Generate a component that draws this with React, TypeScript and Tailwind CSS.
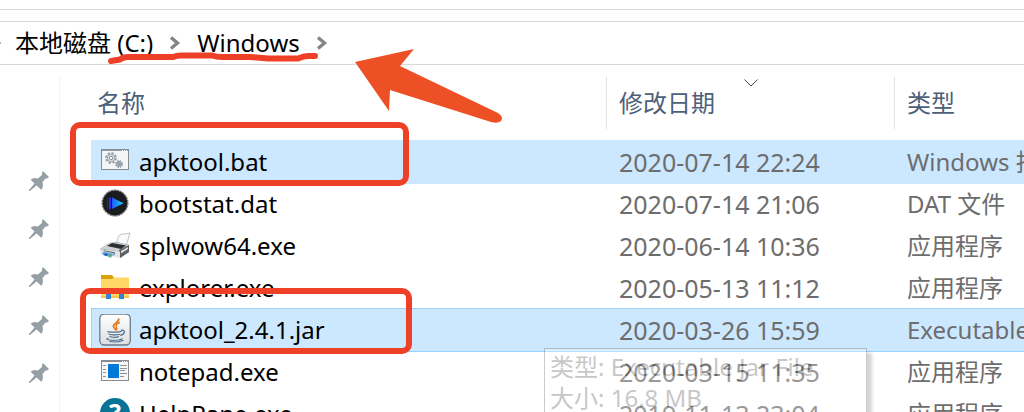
import React, { useState } from 'react';

type IconKind = 'batch' | 'media' | 'printer' | 'folder' | 'java' | 'app' | 'help';

interface FileEntry {
  name: string;
  modified: string;
  type: string;
  icon: IconKind;
}

const FILES: FileEntry[] = [
  { name: 'apktool.bat', modified: '2020-07-14 22:24', type: 'Windows 批处理文件', icon: 'batch' },
  { name: 'bootstat.dat', modified: '2020-07-14 21:06', type: 'DAT 文件', icon: 'media' },
  { name: 'splwow64.exe', modified: '2020-06-14 10:36', type: '应用程序', icon: 'printer' },
  { name: 'explorer.exe', modified: '2020-05-13 11:12', type: '应用程序', icon: 'folder' },
  { name: 'apktool_2.4.1.jar', modified: '2020-03-26 15:59', type: 'Executable Jar File', icon: 'java' },
  { name: 'notepad.exe', modified: '2020-03-15 11:35', type: '应用程序', icon: 'app' },
  { name: 'HelpPane.exe', modified: '2019-11-13 23:04', type: '应用程序', icon: 'help' },
];

const PINNED = ['桌面', '下载', '文档', '图片', '音乐'];

const FileIcon: React.FC<{ kind: IconKind }> = ({ kind }) => (
  <svg viewBox="0 0 32 32" className="size-8 shrink-0" aria-hidden="true">
    {kind === 'batch' && (
      <g>
        <rect x="2.5" y="3.5" width="27" height="20" fill="#f4f5f6" stroke="#868b90" />
        <path d="M3 4.5h26" stroke="#9a9fa4" />
        <path d="M23 4.5h1M25 4.5h1M27 4.5h1" stroke="#fff" />
        <circle cx="12" cy="12" r="4.6" fill="#d5dde3" stroke="#8d9aa5" strokeWidth="2.4" strokeDasharray="2 1.6" />
        <circle cx="12" cy="12" r="3.8" fill="#d5dde3" stroke="#a3afb8" />
        <circle cx="12" cy="12" r="1.7" fill="#fff" stroke="#8d9aa5" />
        <circle cx="20" cy="18" r="2.9" fill="#bcc6ce" stroke="#7f8c97" strokeWidth="2" strokeDasharray="1.3 1" />
        <circle cx="20" cy="18" r="1.2" fill="#eef1f3" stroke="#6f7d88" />
      </g>
    )}
    {kind === 'media' && (
      <g>
        <defs>
          <linearGradient id="play" x1="0" x2="1">
            <stop offset="0" stopColor="#1f5cf5" />
            <stop offset="0.5" stopColor="#1a96fa" />
            <stop offset="1" stopColor="#00e8ff" />
          </linearGradient>
        </defs>
        <circle cx="16" cy="15" r="13.5" fill="#c9c9c9" />
        <circle cx="16" cy="15" r="13" fill="none" stroke="#555" strokeDasharray="1.5 1.5" />
        <circle cx="16" cy="15" r="12.4" fill="#1a1c20" />
        <path d="M8.500 10v10.500" stroke="#3a12d8" strokeWidth="1" />
        <path d="M11 9.500v11.500" stroke="#2a2cf0" strokeWidth="2" />
        <path d="M13 9.500l11.500 5.700L13 21z" fill="url(#play)" />
      </g>
    )}
    {kind === 'printer' && (
      <g>
        <path d="M17 14L20 5.500l2-1L31 3l-3.500 11.500z" fill="#fafafa" stroke="#a9a9a9" strokeWidth="0.7" />
        <path d="M1 19l9-6 8-1 12 3v7l-9 6z" fill="#8b8f92" />
        <path d="M1 18.500l9-5.500 9-.5 11 3-9 6z" fill="#cfd2d4" />
        <path d="M8 16l5-3 14 2.500-5 3.500z" fill="#2c2f31" />
        <path d="M20 20l10-5v7l-9 6z" fill="#5b5f62" />
        <path d="M22 21l7-4v2l-7 4.500z" fill="#dadcdd" />
        <path d="M1 19l20 2.500V28l-5-1L1 22z" fill="#e1e3e4" />
        <path d="M5 20.500l11 2-1 3-11-2z" fill="#33383c" />
        <path d="M2 24l3-2.500 10 2L12 28z" fill="#5aa4e6" stroke="#eee" strokeWidth="0.7" />
        <path d="M6 23.500l3 .5-1.500 2-3-1z" fill="#1b4fb0" />
        <path d="M10.500 24.500l2.500.5-1.500 2-2-.5z" fill="#67b53a" />
      </g>
    )}
    {kind === 'folder' && (
      <g>
        <path d="M2 3h11l2 2.500L13 8H2z" fill="#dca108" />
        <path d="M2 7h11l2-1.500h15V26H2z" fill="#ffd767" />
        <path d="M2 24h28v2H2z" fill="#f6c64b" />
        <path d="M7 27v-6.500a4 4 0 0 1 4-4h10a4 4 0 0 1 4 4V27h-5v-5h-8v5z" fill="#2f86d2" />
        <path d="M8 17h16v2H8z" fill="#66788c" />
      </g>
    )}
    {kind === 'java' && (
      <g>
        <defs>
          <linearGradient id="jar" x1="0" y1="0" x2="0" y2="1">
            <stop offset="0" stopColor="#fff" />
            <stop offset="1" stopColor="#dcdfe2" />
          </linearGradient>
        </defs>
        <rect x="0.8" y="0" width="30.5" height="31" rx="4.5" fill="url(#jar)" stroke="#6d7c89" strokeWidth="1.3" />
        <path d="M19.500 4.500c1.500 3.500-5.500 4.800-5 7.800.2 1.400 1.800 2.400 2.600 4" fill="none" stroke="#e3761c" strokeWidth="1.8" />
        <path d="M21 8.500c-3 1-4.600 2.500-3.700 4 .8 1.300 1.100 2.100-.2 3.800" fill="none" stroke="#e3761c" strokeWidth="1.4" />
        <path d="M9 17.200c-2.500 1 12 1.600 13.500-.2M10 19.500c-1 1.800 9 1.600 11 .7M11 22c0 1.500 6.500 1.700 9 .5" fill="none" stroke="#4d6f8f" strokeWidth="1.2" />
        <path d="M22 16.300c5-1 4 4-.8 5" fill="none" stroke="#4d6f8f" strokeWidth="1.3" />
        <path d="M9.500 24c-6 2 4.500 2.700 10 2 2.500-.4 4-1 3-1.800M10.500 27.500c5.500.8 11.500.2 14-1.500" fill="none" stroke="#4d6f8f" strokeWidth="1.1" />
      </g>
    )}
    {kind === 'app' && (
      <g>
        <rect x="2.5" y="4.5" width="27" height="20" fill="#f7f7f7" stroke="#888c90" />
        <path d="M3 5.500h26" stroke="#888c90" />
        <path d="M23 5.500h1M25 5.500h1M27 5.500h1" stroke="#fff" />
        <rect x="9" y="8" width="11" height="14" fill="#0078d7" />
        <path d="M4 9.500h3M4 13.500h3M4 16.500h3M4 20.500h3M21 9.500h7M21 12.500h7M21 14.500h5M21 17.500h7M21 20.500h4" stroke="#8f9397" />
      </g>
    )}
    {kind === 'help' && (
      <g>
        <circle cx="16" cy="15" r="15" fill="#077396" />
        <text x="16" y="24" textAnchor="middle" fontSize="25" fontWeight="700" fill="#fff">?</text>
      </g>
    )}
  </svg>
);

const Crumb: React.FC<{ label: string }> = ({ label }) => (
  <li className="flex items-center">
    <button className="whitespace-nowrap">{label}</button>
    <svg viewBox="0 0 12 14" className="mx-4 h-3.5 w-3" fill="none" stroke="#858585" strokeWidth="3.4" aria-hidden="true">
      <path d="M2 1.500L8.500 7 2 12.500" />
    </svg>
  </li>
);

const rowStyle = (name: string, selected: string[], focused: string) => {
  if (name === focused) return 'bg-[#cce8ff] outline outline-[#99d1ff]';
  if (selected.includes(name)) return 'bg-[#cce8ff] outline outline-[#cce8ff]';
  return '';
};

// Hand-drawn marks that lie over the window
const Annotations = () => (
  <svg className="pointer-events-none absolute top-0 left-0 h-[412px] w-[1024px]" viewBox="0 0 1024 412" fill="none" aria-hidden="true">
    <g stroke="#ee4026" strokeWidth="6" strokeLinecap="round" strokeLinejoin="round">
      <path d="M111 61L120 59.500Q123 57 128 57H173Q177 55.500 181 55.500H212Q216 57 222 57H250L268 58.500H298Q304 56 308 56H315" />
      <rect x="73" y="125" width="333" height="58" rx="7" />
      <rect x="83" y="291" width="326" height="60" rx="7" />
    </g>
    <path d="M355 62L414 49 400 66 498 113Q504 117 501 121 498 124 491 122L390 90 389 111z" fill="#ee5026" />
  </svg>
);

const App: React.FC = () => {
  const [selected, setSelected] = useState<string[]>(['apktool.bat', 'apktool_2.4.1.jar']);
  const [focused, setFocused] = useState('apktool_2.4.1.jar');

  const handleSelect = (name: string) => {
    setSelected([name]);
    setFocused(name);
  };

  return (
    <div className="relative flex h-screen flex-col overflow-hidden bg-white font-['Noto_Sans','Noto_Sans_CJK_SC',sans-serif] text-2xl text-black">
      <div className="h-2.5 shrink-0 border-b border-[#d9d9d9]"></div>
      <div className="h-3 shrink-0 border-b border-[#d9d9d9]"></div>

      {/* Address bar */}
      <nav className="flex h-[43px] shrink-0 items-center border-b border-[#d9d9d9]" aria-label="地址">
        <span className="mr-3.5 h-0.5 w-px bg-[#b5b5b5]"></span>
        <ol className="flex items-center">
          <Crumb label="本地磁盘 (C:)" />
          <Crumb label="Windows" />
        </ol>
      </nav>

      <div className="flex min-h-0 flex-1 pt-3">
        {/* Quick access pins */}
        <ul className="flex w-[60px] shrink-0 flex-col items-center gap-7 border-r border-[#f3f3f3] pt-[94px] pl-[18px]">
          {PINNED.map((item) => (
            <li key={item}>
              <button className="block" aria-label={item}>
                <svg viewBox="0 0 20 20" className="size-5" fill="#95a0a6" aria-hidden="true">
                  <path d="M14 0L20 6 18 7.500H16.500L13.500 11 14 15 12.500 19 7.500 14.500 1 20H0V19L5.500 12.500 1.500 8.500 5 7 9 7.500 13 4V2z" />
                </svg>
              </button>
            </li>
          ))}
        </ul>

        <div className="min-w-0 flex-1 pl-8">
          <table className="w-full table-fixed border-separate border-spacing-0 text-left">
            <thead className="text-[#4c607a]">
              <tr>
                <th className="h-16 w-[514px] p-0 align-top font-normal">
                  <button className="flex h-[52px] w-full items-center pl-[5px]">名称</button>
                </th>
                <th className="h-16 w-72 p-0 align-top font-normal" aria-sort="descending">
                  <button className="relative flex h-[52px] w-full items-center border-l border-[#e2e2e2] pl-3">
                    修改日期
                    <svg viewBox="0 0 14 8" className="absolute top-0.5 left-1/2 h-2 w-3.5 -translate-x-1/2" fill="none" stroke="#444" aria-hidden="true">
                      <path d="M0.500 0.500L7 7 13.500 0.500" />
                    </svg>
                  </button>
                </th>
                <th className="h-16 p-0 align-top font-normal">
                  <button className="flex h-[52px] w-full items-center border-l border-[#e2e2e2] pl-3">类型</button>
                </th>
              </tr>
            </thead>
            <tbody>
              {FILES.map((file) => (
                <tr
                  key={file.name}
                  onClick={() => handleSelect(file.name)}
                  className={rowStyle(file.name, selected, focused)}
                >
                  <td className="h-[42px] p-0 pl-[7px]">
                    <div className="flex items-center gap-2 whitespace-nowrap">
                      <FileIcon kind={file.icon} />
                      {file.name}
                    </div>
                  </td>
                  <td className="h-[42px] p-0 pl-[13px] text-[25px] leading-8 whitespace-nowrap text-[#6d6d6d]">{file.modified}</td>
                  <td className="h-[42px] overflow-hidden p-0 pl-[13px] whitespace-nowrap text-[#6d6d6d]">{file.type}</td>
                </tr>
              ))}
            </tbody>
          </table>
        </div>
      </div>

      {/* Tooltip, half faded in */}
      <div role="tooltip" className="pointer-events-none absolute top-[348px] left-[544px] w-[323px] border border-[#555] bg-white px-[5px] py-0.5 leading-[31px] text-[#4a4a4a] opacity-30 shadow-[5px_5px_3px_#777]">
        <p>类型: Executable Jar File</p>
        <p>大小: 16.8 MB</p>
      </div>

      <Annotations />
    </div>
  );
};

export default App;
